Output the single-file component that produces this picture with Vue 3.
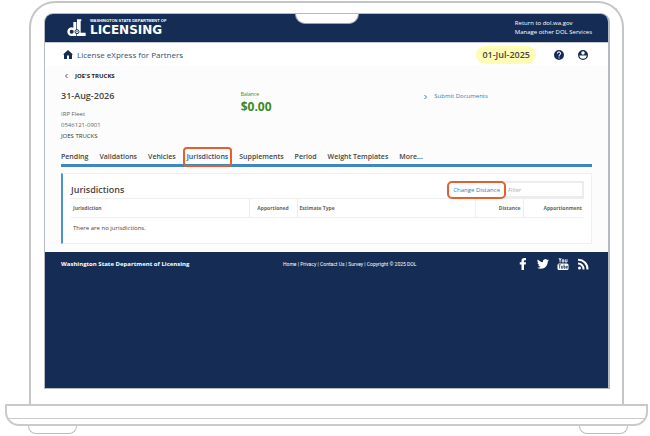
<template>
    <div class="page">
        <div class="lid">
            <div class="notch"></div>
            <div class="screen">
                <header class="header">
                    <a href="#" class="logo">
                        <svg class="logo-mark" viewBox="0 0 57 54" aria-hidden="true">
                            <path fill="#fff" fill-rule="evenodd" d="M19 9h9v42H14A13 13 0 1 1 19 26zM14 32a6 6 0 1 0 0 12 6 6 0 0 0 0-12z" />
                            <path fill="#fff" d="M30 1h13v5h-2v35h15v10H30z" />
                            <circle cx="30" cy="38" r="6" fill="#fff" stroke="#152d54" stroke-width="3" />
                            <circle cx="30" cy="38" r="2" fill="#152d54" />
                        </svg>
                        <span class="logo-text">
                            <span class="logo-top">WASHINGTON STATE DEPARTMENT OF</span>
                            <span class="logo-name">LICENSING</span>
                        </span>
                    </a>
                    <nav class="header-links">
                        <a href="#">Return to dol.wa.gov</a>
                        <a href="#">Manage other DOL Services</a>
                    </nav>
                </header>

                <div class="appBar">
                    <a href="#" class="appBar-home">
                        <svg viewBox="2 3 20 18" aria-hidden="true"><path fill="#152d54" d="M10 21v-7h4v7h6v-9h2L12 3 2 12h2v9z" /></svg>
                        <span>License eXpress for Partners</span>
                    </a>
                    <span class="appBar-date">01-Jul-2025</span>
                    <button class="appBar-icon" aria-label="Help">
                        <svg viewBox="2 2 20 20"><path fill="#152d54" d="M12 2a10 10 0 1 0 0 20 10 10 0 0 0 0-20zm1 17h-2v-2h2zm2.070-7.750-.9.920C13.450 12.900 13 13.500 13 15h-2v-.5c0-1.100.45-2.100 1.170-2.830l1.240-1.260A2 2 0 1 0 10 9H8a4 4 0 1 1 7.070 2.250z" /></svg>
                    </button>
                    <button class="appBar-icon" aria-label="Account">
                        <svg viewBox="2 2 20 20"><path fill="#152d54" fill-rule="evenodd" d="M12 2a10 10 0 1 0 0 20 10 10 0 0 0 0-20zm0 2.500a3.500 3.500 0 1 1 0 7 3.500 3.500 0 0 1 0-7zM4.500 13h15c-.5 4-3.500 6.700-7.500 6.700S5 17 4.500 13z" /></svg>
                    </button>
                </div>

                <main class="main">
                    <a href="#" class="back">
                        <svg viewBox="0 0 6 10" aria-hidden="true"><path d="M5 1 1 5l4 4" /></svg>
                        JOE'S TRUCKS
                    </a>

                    <section class="account">
                        <div>
                            <h1>31-Aug-2026</h1>
                            <p>IRP Fleet</p>
                            <p>0546121-0901</p>
                            <p class="account-name">JOES TRUCKS</p>
                        </div>
                        <div class="balance">
                            <span>Balance</span>
                            <strong>$0.00</strong>
                        </div>
                        <a href="#" class="submit">
                            <svg viewBox="0 0 6 10" aria-hidden="true"><path d="m1 1 4 4-4 4" /></svg>
                            Submit Documents
                        </a>
                    </section>

                    <nav class="tabs">
                        <a
                            v-for="tab in tabs"
                            :key="tab"
                            href="#"
                            :class="{ active: tab === activeTab }"
                            @click.prevent="activeTab = tab"
                        >{{ tab }}</a>
                    </nav>

                    <section class="panel">
                        <div class="panel-head">
                            <h2>Jurisdictions</h2>
                            <button class="change">Change Distance</button>
                            <input v-model="filter" type="text" class="filter" placeholder="Filter" aria-label="Filter">
                        </div>
                        <table>
                            <thead>
                                <tr>
                                    <th>Jurisdiction</th>
                                    <th class="narrow center">Apportioned</th>
                                    <th>Estimate Type</th>
                                    <th class="narrow right">Distance</th>
                                    <th class="last right">Apportionment</th>
                                </tr>
                            </thead>
                            <tbody>
                                <tr>
                                    <td colspan="5">There are no jurisdictions.</td>
                                </tr>
                            </tbody>
                        </table>
                    </section>
                </main>

                <footer class="footer">
                    <strong>Washington State Department of Licensing</strong>
                    <div class="footer-links">
                        <template v-for="link in links" :key="link">
                            <a href="#">{{ link }}</a> |
                        </template>
                        Copyright © 2025 DOL
                    </div>
                    <div class="social">
                        <a href="#" aria-label="Facebook">
                            <svg viewBox="0 0 24 24"><path fill="#fff" d="M9 24V13H5.500V8.500H9V5.500C9 2 11 0 14.500 0H18v4.500h-2.300c-1.500 0-1.700.7-1.700 1.800v2.200h4l-.5 4.500H14v11z" /></svg>
                        </a>
                        <a href="#" aria-label="Twitter">
                            <svg viewBox="0 0 24 24"><path fill="#fff" d="M24 4.600c-.9.400-1.800.7-2.800.8 1-.6 1.800-1.600 2.200-2.700-1 .6-2 1-3.100 1.200a4.900 4.900 0 0 0-8.400 4.500C7.700 8.100 4.100 6.100 1.700 3.100a4.900 4.900 0 0 0 1.500 6.600c-.8 0-1.600-.2-2.200-.6v.1c0 2.400 1.700 4.400 3.900 4.800-.7.200-1.500.2-2.200.1.600 2 2.400 3.400 4.600 3.400A9.900 9.900 0 0 1 0 19.500 14 14 0 0 0 7.500 21.700c9.100 0 14.300-7.700 14-14.600 1-.7 1.800-1.600 2.500-2.500z" /></svg>
                        </a>
                        <a href="#" aria-label="YouTube">
                            <svg viewBox="0 0 24 24">
                                <path fill="none" stroke="#fff" stroke-width="1.800" d="m4 0 2.200 4.500V9M8.500 0 6.200 4.500M10.500 3.500h3V8h-3zM16.500 2.500V8h3.500V2.500" />
                                <rect y="11" x="1" width="22" height="13" rx="3" fill="#fff" />
                                <path fill="none" stroke="#152d54" stroke-width="1.400" d="M3 13.500h4.500M5.200 13.500V21M9 15.500v5h2.500v-5M14 13v7.500h2.200v-4H14M21 20.500h-2.500v-4H21v2h-2.500" />
                            </svg>
                        </a>
                        <a href="#" aria-label="RSS">
                            <svg viewBox="0 0 24 24"><circle cx="5" cy="20" r="3" fill="#fff" /><path fill="none" stroke="#fff" stroke-width="4" d="M2 11a11 11 0 0 1 11 12M2 3.500A18.500 18.500 0 0 1 21 23" /></svg>
                        </a>
                    </div>
                </footer>
            </div>
        </div>
        <div class="base"></div>
        <div class="feet">
            <span></span>
            <span></span>
        </div>
    </div>
</template>

<script setup>
import { ref } from 'vue';

const tabs = ['Pending', 'Validations', 'Vehicles', 'Jurisdictions', 'Supplements', 'Period', 'Weight Templates', 'More...'];
const links = ['Home', 'Privacy', 'Contact Us', 'Survey'];
const activeTab = ref('Jurisdictions');
const filter = ref('');
</script>

<style>
body {
    background: #fff;
}
</style>

<style scoped>
* {
    box-sizing: border-box;
}

.page {
    display: flex;
    flex-direction: column;
    min-height: 100vh;
    padding: 1px 2px 2px 5px;
    font-family: "Open Sans", "Noto Sans", sans-serif;
    font-size: 6px;
    line-height: 10px;
    color: #444;
}

a {
    color: inherit;
    text-decoration: none;
}

button {
    font: inherit;
    background: none;
    border: 0;
    padding: 0;
}

h1, h2, p {
    margin: 0;
}

svg {
    display: block;
}

/* laptop */
.lid {
    position: relative;
    flex: 1;
    display: flex;
    margin: 0 24px;
    padding: 10px 12px 15px 13px;
    border: 2px solid #c3c5c7;
    border-bottom: 0;
    border-radius: 26px 26px 0 0;
}

.notch {
    position: absolute;
    top: 11px;
    left: 50%;
    width: 64px;
    height: 10px;
    margin-left: -32px;
    background: #fff;
    border: 1px solid #9da3aa;
    border-top: 0;
    border-radius: 0 0 10px 10px;
}

.screen {
    flex: 1;
    display: flex;
    flex-direction: column;
    border: 1px solid #b5bac0;
    border-right-width: 2px;
    border-radius: 9px 9px 0 0;
    overflow: hidden;
}

.base {
    height: 22px;
    border: 2px solid #c8cacb;
    border-radius: 0 0 14px 14px;
    background: linear-gradient(#c8cacb, #c8cacb) 0 12px / 100% 1px no-repeat;
}

.feet {
    display: flex;
    justify-content: space-between;
    padding: 0 20px 0 23px;
}

.feet span {
    width: 49px;
    height: 8px;
    border: 1px solid #bbbdbf;
    border-top: 0;
    border-radius: 0 0 8px 8px;
}

/* header */
.header {
    display: flex;
    justify-content: space-between;
    align-items: center;
    height: 28px;
    padding: 0 16px 0 22px;
    background: #152d54;
    color: #fff;
}

.logo {
    display: flex;
    align-items: center;
    gap: 4px;
}

.logo-mark {
    width: 19px;
    height: 18px;
}

.logo-text {
    display: flex;
    flex-direction: column;
}

.logo-top {
    font-family: "Liberation Sans", sans-serif;
    font-size: 4px;
    font-weight: bold;
    line-height: 4px;
}

.logo-name {
    font-family: "DejaVu Sans", sans-serif;
    font-size: 12px;
    font-weight: bold;
    line-height: 14px;
}

.header-links {
    display: flex;
    flex-direction: column;
    line-height: 9px;
}

.appBar {
    display: flex;
    align-items: center;
    height: 24px;
    padding: 0 20px 0 18px;
    border-top: 1px solid #c5cad1;
    background: #fff;
}

.appBar-home {
    display: flex;
    align-items: center;
    gap: 4px;
    flex: 1;
    font-size: 8px;
    color: #2f4f77;
}

.appBar-home svg {
    width: 10px;
    height: 9px;
}

.appBar-date {
    padding: 4px 6px;
    border-radius: 9px;
    background: #fffcb5;
    font-size: 9px;
    font-weight: 600;
}

.appBar-icon {
    margin-left: 14px;
}

.appBar-date + .appBar-icon {
    margin-left: 18px;
}

.appBar-icon svg {
    width: 10px;
    height: 10px;
}

/* account */
.main {
    padding: 5px 16px 8px;
    background: #fcfcfc;
}

.back {
    display: flex;
    align-items: center;
    gap: 7px;
    padding-left: 4px;
    font-weight: bold;
    color: #222;
}

.back svg,
.submit svg {
    width: 3px;
    height: 6px;
    fill: none;
    stroke: #555;
    stroke-width: 2;
}

.account {
    display: grid;
    grid-template-columns: 180fr 184fr 168fr;
    padding-top: 9px;
    line-height: 11px;
}

.account h1 {
    margin-bottom: 7px;
    font-size: 9px;
    font-weight: 600;
    line-height: 12px;
}

.account p {
    color: #666;
}

.account .account-name {
    color: #333;
}

.balance {
    display: flex;
    flex-direction: column;
    color: #3b8a22;
    font-size: 5px;
    line-height: 8px;
}

.balance strong {
    font-size: 12px;
    line-height: 18px;
}

.submit {
    display: flex;
    align-items: center;
    align-self: start;
    gap: 7px;
    padding-top: 1px;
    color: #2f80b9;
}

.submit svg {
    stroke: #2f80b9;
}

.tabs {
    display: flex;
    gap: 3px;
    margin-top: 5px;
    border-bottom: 3px solid #3f87be;
    font-size: 7px;
    font-weight: 600;
    line-height: 10px;
}

.tabs a {
    margin-bottom: -3px;
    padding: 3px 2px;
    border: 2px solid transparent;
    border-radius: 4px;
}

.tabs a:first-child {
    margin-left: -4px;
}

.tabs .active {
    border-color: #e2602f;
    color: #2a4d7b;
}

/* panel */
.panel {
    margin-top: 6px;
    padding: 7px 7px 4px 8px;
    border: 1px solid #f0f0f0;
    border-left: 2px solid #4c94c8;
    background: #fff;
}

.panel-head {
    display: flex;
    align-items: center;
    height: 17px;
}

.panel-head h2 {
    flex: 1;
    font-size: 9px;
    font-weight: 600;
}

.change {
    z-index: 1;
    height: 18px;
    margin-right: -2px;
    padding: 0 4px;
    border: 2px solid #e2602f;
    border-radius: 5px;
    background: #fff;
    color: #2f80b9;
}

.filter {
    width: 80px;
    height: 17px;
    padding: 0 2px;
    border: 2px solid #ececec;
    background: #fff;
    font: inherit;
    outline: 0;
}

.filter::placeholder {
    color: #aaa;
    font-style: italic;
}

table {
    width: 100%;
    border-collapse: collapse;
    table-layout: fixed;
    font-size: 5px;
}

th {
    height: 19px;
    padding: 0 2px;
    border-top: 1px solid #eee;
    border-bottom: 1px solid #eee;
    text-align: left;
    color: #666;
}

th + th {
    border-left: 1px solid #eee;
}

.narrow {
    width: 48px;
}

.last {
    width: 61px;
}

.center {
    text-align: center;
}

.right {
    text-align: right;
}

td {
    height: 21px;
    padding: 0 2px;
    font-size: 6px;
}

/* footer */
.footer {
    flex: 1;
    display: grid;
    grid-template-columns: 222px 1fr auto;
    align-items: center;
    align-content: start;
    padding: 6px 19px 0 16px;
    background: #152d54;
    color: #fff;
}

.footer-links {
    font-family: Roboto, sans-serif;
    font-size: 5px;
}

.social {
    display: flex;
    gap: 8px;
}

.social svg {
    width: 12px;
    height: 12px;
}
</style>
